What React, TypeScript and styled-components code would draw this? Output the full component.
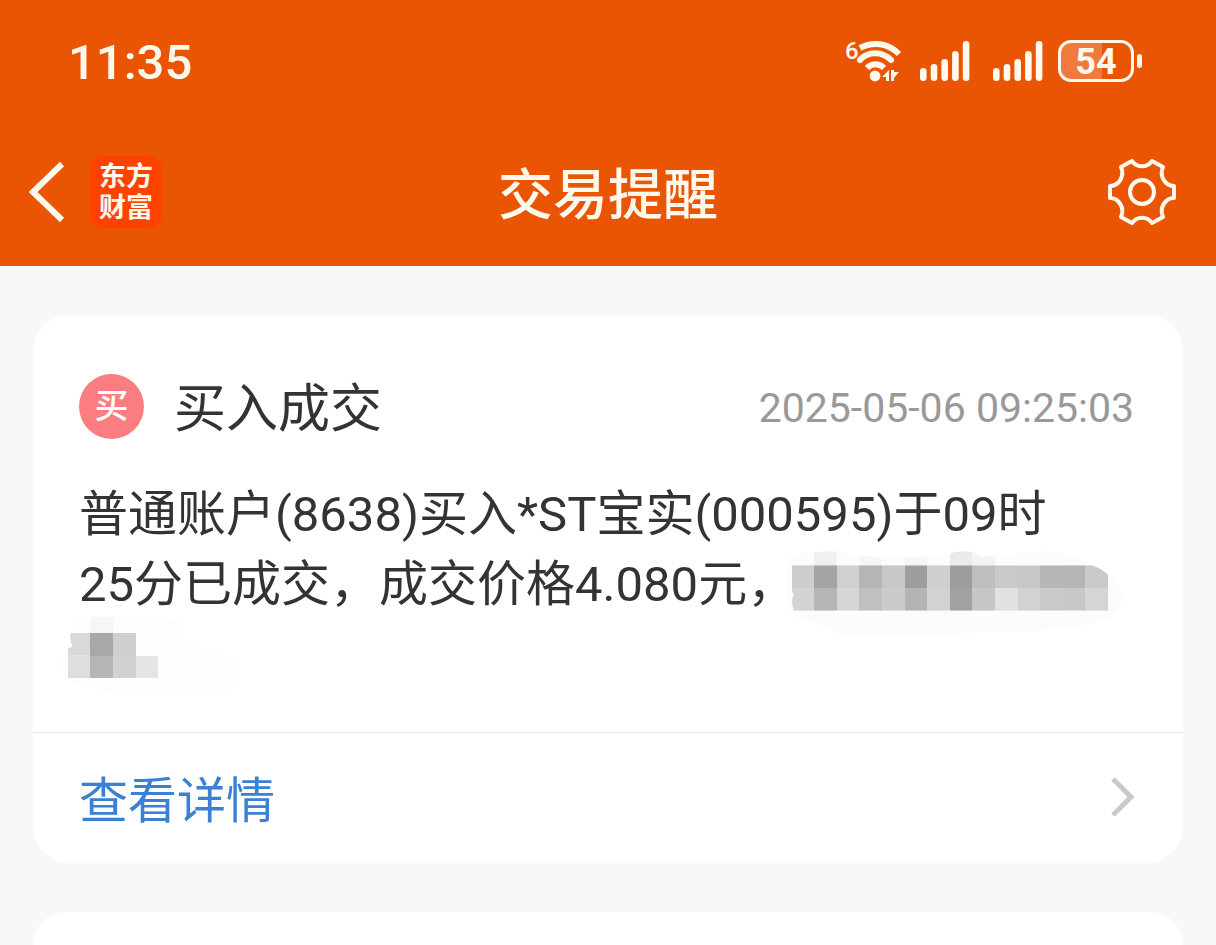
import React from "react";
import styled, { createGlobalStyle } from "styled-components";

const GlobalStyle = createGlobalStyle`
  * { box-sizing: border-box; }
  body {
    margin: 0;
    background: #f6f8fa;
    color: #333;
    font-family: Roboto, "Noto Sans CJK SC", sans-serif;
  }
  h1, h2, p { margin: 0; font-weight: 400; }
`;

const Page = styled.div`
  min-height: 100vh;
  display: flex;
  flex-direction: column;
`;

const Header = styled.header`
  background: #ea5504;
  color: #fff8ec;
`;

const StatusBar = styled.div`
  display: flex;
  align-items: center;
  justify-content: space-between;
  height: 122px;
  padding: 0 74px 0 68px;
`;

const Clock = styled.time`
  padding-top: 4px;
  font-size: 49px;
  font-weight: 500;
  line-height: 60px;
`;

const StatusIcons = styled.div`
  display: flex;
  align-items: center;
  gap: 15px;
`;

const Signals = styled.div`
  display: flex;
  gap: 22px;
`;

const Battery = styled.div`
  display: flex;
  align-items: center;
  gap: 3px;
  &::after {
    content: "";
    width: 5px;
    height: 14px;
    border-radius: 3px;
    background: #fff8ec;
  }
`;

const BatteryShell = styled.div`
  width: 76px;
  height: 42px;
  border: 3px solid #fff8ec;
  border-radius: 13px;
  background: linear-gradient(90deg, #ee7a3e 59%, transparent 59%);
  font-size: 36px;
  font-weight: 700;
  line-height: 38px;
  text-align: center;
`;

const NavBar = styled.nav`
  display: grid;
  grid-template-columns: 1fr auto 1fr;
  align-items: center;
  height: 144px;
  padding: 0 28px 4px;
`;

const NavSide = styled.div`
  display: flex;
  align-items: center;
  gap: 24px;
`;

const IconButton = styled.button`
  display: flex;
  padding: 0;
  border: 0;
  background: none;
  color: #fff8ec;
  cursor: pointer;
`;

const SettingsButton = styled(IconButton)`
  justify-self: end;
  padding-right: 10px;
`;

const Logo = styled.div`
  width: 72px;
  height: 72px;
  padding: 6px 0;
  border-radius: 13px;
  background: #ff4200;
  font-size: 27px;
  font-weight: 700;
  line-height: 31px;
  text-align: center;
`;

const Title = styled.h1`
  padding-top: 6px;
  font-size: 55px;
  font-weight: 500;
  line-height: 72px;
`;

const Feed = styled.main`
  flex: 1;
  display: flex;
  flex-direction: column;
  gap: 49px;
  padding: 49px 33px 0;
`;

const Card = styled.article`
  border-radius: 36px;
  background: #fff;
`;

const NextCard = styled(Card)`
  flex: 1;
  border-radius: 36px 36px 0 0;
`;

const CardHead = styled.div`
  display: flex;
  align-items: center;
  gap: 30px;
  padding: 51px 49px 0 46px;
`;

const BuyBadge = styled.span`
  width: 65px;
  height: 65px;
  border-radius: 50%;
  background: #fc7d7f;
  color: #fff;
  font-size: 34px;
  font-weight: 500;
  line-height: 64px;
  text-align: center;
`;

const CardTitle = styled.h2`
  flex: 1;
  padding-top: 8px;
  font-size: 52px;
  line-height: 72px;
`;

const Stamp = styled.time`
  padding-top: 4px;
  color: #999;
  font-size: 41px;
  line-height: 48px;
`;

const Message = styled.div`
  position: relative;
  min-height: 210px;
  margin: 34px 46px 42px;
  font-size: 49px;
  line-height: 70px;
`;

const Mosaic = styled.svg<{ $x: number; $y: number }>`
  position: absolute;
  left: ${(p) => p.$x}px;
  top: ${(p) => p.$y}px;
`;

const DetailLink = styled.a`
  display: flex;
  align-items: center;
  justify-content: space-between;
  height: 131px;
  padding: 0 48px 4px 46px;
  border-top: 1px solid #e8e8e8;
  color: #3a80d4;
  font-size: 49px;
  text-decoration: none;
`;

const SixLabel = styled.text`
  font-family: Roboto, sans-serif;
  font-size: 24px;
  font-weight: 500;
`;

const WifiIcon = () => (
  <svg width="60" height="60" viewBox="-2 -8 60 60" fill="none" stroke="#fff8ec" aria-hidden="true">
    <SixLabel x="-1" y="20" fill="#fff8ec" stroke="none">6</SixLabel>
    <g strokeWidth="6">
      <path d="M14 9 C27 2 42 4 53 15" strokeLinecap="butt" />
      <path d="M14 21 C22 12 36 12 45 21" strokeLinecap="round" />
      <path d="M21 29 C26 24 33 24 38 29" strokeLinecap="butt" />
    </g>
    <circle cx="29" cy="37" r="5.4" fill="#fff8ec" stroke="none" />
    <path d="M43 31 L36 38 H40 V42 H43 Z M45 42 V31 H48 V33 H53 L48 39 V42 Z" fill="#fff8ec" stroke="none" />
  </svg>
);

const SIGNAL_BARS = [13, 17, 22, 30, 40];

const SignalIcon = () => (
  <svg width="51" height="42" viewBox="0 0 51 42" fill="#fff8ec" aria-hidden="true">
    {SIGNAL_BARS.map((h, i) => (
      <rect key={h} x={1 + i * 10.7} y={41 - h} width="6.6" height={h} rx="3.3" />
    ))}
  </svg>
);

const BackIcon = () => (
  <svg width="38" height="64" viewBox="0 0 38 64" fill="none" stroke="currentColor" strokeWidth="6">
    <path d="M34 4 L5 32 L34 60" />
  </svg>
);

const GearIcon = () => (
  <svg width="72" height="72" viewBox="0 0 72 72" fill="none" stroke="currentColor" strokeWidth="4" strokeLinejoin="round">
    <path d="M26 5 C31 12 41 12 46 5 L57 11 C53 20 59 30 68 30 L68 42 C59 42 53 52 57 61 L46 67 C41 60 31 60 26 67 L15 61 C19 52 13 42 4 42 L4 30 C13 30 19 20 15 11 Z" />
    <circle cx="36" cy="36" r="12" />
  </svg>
);

const ChevronIcon = () => (
  <svg width="24" height="40" viewBox="0 0 24 40" fill="none" stroke="#c9c9c9" strokeWidth="5" aria-hidden="true">
    <path d="M2 3 L20 21 L2 39" />
  </svg>
);

const CELL = 67.8;

const TOP_ROW = ["#cdcdcd", "#a4a4a4", "#d0d0d0", "#b5b5b5", "#c7c7c7", "#9e9e9e", "#cfcfcf", "#9d9d9d", "#bebebe", "#cacaca", "#c8c8c8", "#b7b7b7", "#b5b5b5", "#cacaca"];
const LOW_ROW = ["#d3d3d3", "#b5b5b5", "#d6d6d6", "#c0c0c0", "#cbcbcb", "#b4b4b4", "#d2d2d2", "#a1a1a1", "#c6c6c6", "#e1e1e1", "#d2d2d2", "#cacaca", "#c8c8c8", "#d5d5d5"];

const AmountMosaic = () => (
  <Mosaic $x={691} $y={60} width="380" height="110" viewBox="0 0 1140 330" aria-hidden="true">
    <path d="M50 76 Q60 38 132 36 L200 34 L330 56 L470 48 L540 40 Q610 26 640 50 L810 34 Q900 34 960 74 Q1050 110 1058 170 Q1054 220 1010 235 Q880 280 680 274 L400 290 Q240 302 180 272 Q160 250 110 244 Q60 225 50 190 Z" fill="#fcfcfc" />
    <path d="M132 36 L200 34 V76 H132 Z" fill="#f0f0f0" />
    <path d="M268 45 L336 56 V76 H268 Z M404 55 L471 48 V76 H404 Z" fill="#f6f6f6" />
    <path d="M540 40 Q575 30 607 36 V76 H540 Z" fill="#eaeaea" />
    <path d="M607 36 L640 52 L675 46 V76 H607 Z" fill="#f4f4f4" />
    <clipPath id="amount-edge">
      <path d="M65 76 H965 Q995 86 1014 104 V212 H72 Q60 186 72 160 L65 156 Z" />
    </clipPath>
    <g clipPath="url(#amount-edge)" shapeRendering="crispEdges">
      {TOP_ROW.map((c, i) => (
        <rect key={i} x={65 + i * CELL} y="76" width={CELL} height="68" fill={c} />
      ))}
      {LOW_ROW.map((c, i) => (
        <rect key={i} x={65 + i * CELL} y="144" width={CELL} height="68" fill={c} />
      ))}
    </g>
  </Mosaic>
);

const TailMosaic = () => (
  <Mosaic $x={-29} $y={120} width="220" height="110" viewBox="0 0 660 330" aria-hidden="true">
    <path d="M62 100 Q70 54 125 50 H340 Q400 56 404 110 L400 138 Q540 140 566 210 Q560 270 500 292 L400 278 H190 Q130 270 110 258 Q40 250 34 190 Q36 160 54 146 Z" fill="#fdfdfd" />
    <path d="M121 50 H190 V99 H121 Z" fill="#f6f6f6" />
    <path d="M62 99 H121 V167 H54 V146 L68 139 Q58 120 62 99 Z" fill="#d9d9d9" />
    <g shapeRendering="crispEdges">
      <rect x="54" y="167" width="67" height="68" fill="#dedede" />
      <rect x="121" y="99" width="69" height="68" fill="#a8a8a8" />
      <rect x="121" y="167" width="69" height="68" fill="#b6b6b6" />
      <rect x="190" y="99" width="68" height="68" fill="#cfcfcf" />
      <rect x="190" y="167" width="68" height="68" fill="#d1d1d1" />
      <rect x="258" y="167" width="67" height="68" fill="#e5e5e5" />
    </g>
  </Mosaic>
);

export default function App() {
  return (
    <>
      <GlobalStyle />
      <Page>
        <Header>
          <StatusBar>
            <Clock>11:35</Clock>
            <StatusIcons>
              <WifiIcon />
              <Signals>
                <SignalIcon />
                <SignalIcon />
              </Signals>
              <Battery>
                <BatteryShell>54</BatteryShell>
              </Battery>
            </StatusIcons>
          </StatusBar>
          <NavBar>
            <NavSide>
              <IconButton type="button" aria-label="返回">
                <BackIcon />
              </IconButton>
              <Logo>
                东方
                <br />
                财富
              </Logo>
            </NavSide>
            <Title>交易提醒</Title>
            <SettingsButton type="button" aria-label="设置">
              <GearIcon />
            </SettingsButton>
          </NavBar>
        </Header>
        <Feed>
          <Card>
            <CardHead>
              <BuyBadge>买</BuyBadge>
              <CardTitle>买入成交</CardTitle>
              <Stamp dateTime="2025-05-06T09:25:03">2025-05-06 09:25:03</Stamp>
            </CardHead>
            <Message>
              <p>
                普通账户(8638)买入*ST宝实(000595)于09时
                <br />
                25分已成交，成交价格4.080元，
              </p>
              <AmountMosaic />
              <TailMosaic />
            </Message>
            <DetailLink href="#detail">
              查看详情
              <ChevronIcon />
            </DetailLink>
          </Card>
          <NextCard />
        </Feed>
      </Page>
    </>
  );
}
